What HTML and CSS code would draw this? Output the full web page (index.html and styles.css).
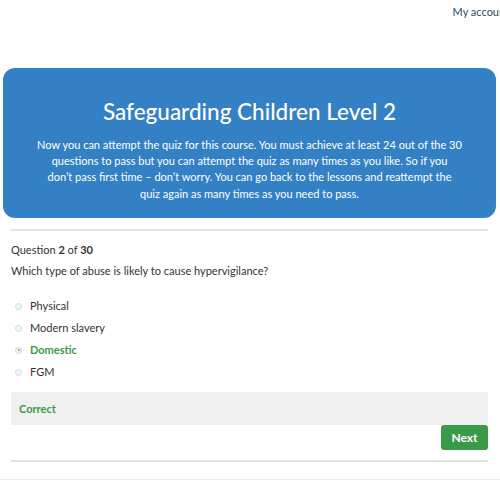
FILE: index.html
```html
<!DOCTYPE html>
<html>
<head>
<meta charset="utf-8">
<link rel="stylesheet" href="styles.css">
</head>
<body>
<div class="topbar"><a class="account">My account</a></div>
<div class="hero">
  <h1 class="hero-title">Safeguarding Children Level 2</h1>
  <p class="hero-text">Now you can attempt the quiz for this course. You must achieve at least 24 out of the 30<br>questions to pass but you can attempt the quiz as many times as you like. So if you<br>don’t pass first time – don’t worry. You can go back to the lessons and reattempt the<br>quiz again as many times as you need to pass.</p>
</div>
<div class="quiz">
  <div class="count">Question <b>2</b> of <b>30</b></div>
  <div class="question">Which type of abuse is likely to cause hypervigilance?</div>
  <ul class="options">
    <li class="option"><span class="radio"></span>Physical</li>
    <li class="option"><span class="radio"></span>Modern slavery</li>
    <li class="option selected"><span class="radio checked"></span>Domestic</li>
    <li class="option"><span class="radio"></span>FGM</li>
  </ul>
  <div class="feedback">Correct</div>
  <div class="actions"><button class="next">Next</button></div>
</div>
<div class="footer-line"></div>
</body>
</html>
```
FILE: styles.css
```css
html, body { margin: 0; padding: 0; background: #fff; }
body { font-family: Lato, "Open Sans", sans-serif; color: #333; overflow: hidden; width: 500px; }
.topbar { height: 68px; display: flex; justify-content: flex-end; white-space: nowrap; overflow: hidden; }
.account { font-size: 11px; color: #2d4d6b; padding-top: 5px; margin-right: -9px; line-height: 14px; }
.hero { margin: 0 4px 0 3px; background: #3480c4; border-radius: 12px; color: #fff; text-align: center; padding: 30px 20px 10px; height: 110px; }
.hero-title { margin: 0; font-size: 22.5px; font-weight: 500; line-height: 28px; }
.hero-text { margin: 11px 0 0; font-size: 11px; line-height: 16.2px; }
.quiz { margin: 11px 12px 0 11px; border-top: 2px solid #e2e2e2; padding-top: 12px; }
.count { font-size: 11px; line-height: 14px; color: #333; }
.count b { font-weight: 700; }
.question { font-size: 11px; line-height: 14px; margin-top: 7px; }
.options { list-style: none; margin: 17px 0 0; padding: 0 0 0 4px; }
.option { display: flex; align-items: center; font-size: 11px; line-height: 14px; height: 22px; color: #333; }
.radio { width: 7px; height: 7px; border-radius: 50%; border: 1px solid #d6d6d6; background: #f4f4f4; margin-right: 8px; box-sizing: border-box; position: relative; }
.radio.checked::after { content: ""; position: absolute; left: 1.5px; top: 1.5px; width: 2px; height: 2px; border-radius: 50%; background: #999; }
.option.selected { color: #3a9a48; font-weight: 700; }
.feedback { margin-top: 9px; background: #f0f0f0; height: 33px; display: flex; align-items: center; padding-left: 8px; font-size: 11px; font-weight: 700; color: #3a9a48; }
.actions { display: flex; justify-content: flex-end; border-bottom: 2px solid #e2e2e2; padding-bottom: 10px; }
.next { background: #3a9a48; color: #fff; border: none; border-radius: 3px; font-family: inherit; font-size: 12px; font-weight: 700; width: 47px; height: 25px; padding: 0; }
.footer-line { margin-top: 17px; border-top: 1px solid #eee; }
```
